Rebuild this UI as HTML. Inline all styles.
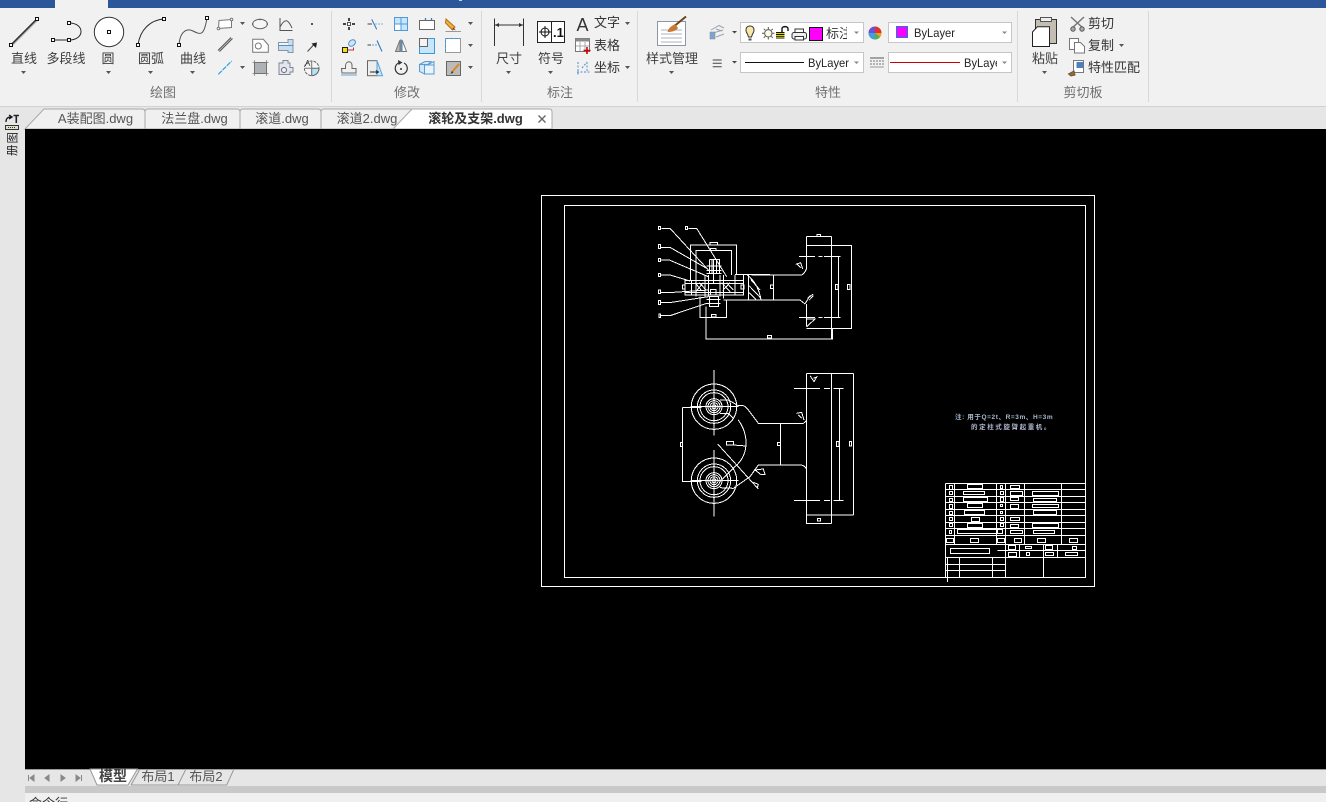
<!DOCTYPE html>
<html><head><meta charset="utf-8"><style>
html,body{margin:0;padding:0;background:#000;overflow:hidden;width:1326px;height:802px}
svg{display:block}
text{font-family:"Liberation Sans","Noto Sans CJK SC",sans-serif}
.l{font-size:13px;fill:#3f3f3f;text-anchor:middle}
.g{font-size:13px;fill:#6f6f6f;text-anchor:middle}
.t{font-size:13px;fill:#555;text-anchor:middle}
.s{font-size:13px;fill:#333}
.i{fill:none;stroke:#555;stroke-width:1}
.b{fill:none;stroke:#2a2a2a;stroke-width:1}
.c{fill:#fff;stroke:#c6c6c6;stroke-width:1}
.cad{fill:none;stroke:#fff;stroke-width:3;shape-rendering:crispEdges}
.cad1{fill:none;stroke:#fff;stroke-width:1;shape-rendering:crispEdges}
</style></head><body>
<svg width="1326" height="802" viewBox="0 0 1326 802" xmlns="http://www.w3.org/2000/svg">
<defs><clipPath id="cb"><rect x="824" y="24" width="23" height="17"/></clipPath></defs>
<!-- chrome -->
<rect width="1326" height="802" fill="#e6e6e6"/>
<rect x="0" y="0" width="1326" height="107" fill="#f1f1f1"/>
<rect x="0" y="0" width="55" height="8" fill="#2b579a"/>
<rect x="108" y="0" width="1218" height="8" fill="#2b579a"/>
<rect x="459" y="0" width="3" height="1" fill="#c8d2e4"/>
<rect x="0" y="106" width="1326" height="1" fill="#d2d2d2"/>
<g stroke="#d8d8d8"><path d="M331.5 11V102M481.5 11V102M637.5 11V102M1017.5 11V102M1148.5 11V102"/></g>

<!-- draw icons -->
<path d="M11 45L37 19" stroke="#333" stroke-width="1.600"/><path d="M12 46L38 20" stroke="#bbb"/>
<rect x="9.500" y="43.500" width="3" height="3" fill="#fff" stroke="#111"/><rect x="35.500" y="17.500" width="3" height="3" fill="#fff" stroke="#111"/>
<path d="M53 40H69C85 40 85 23 69 23" class="b"/>
<rect x="51.500" y="38.500" width="3" height="3" fill="#fff" stroke="#111"/><rect x="67.500" y="38.500" width="3" height="3" fill="#fff" stroke="#111"/><rect x="67.500" y="21.500" width="3" height="3" fill="#fff" stroke="#111"/>
<circle cx="109" cy="32" r="14.700" fill="#fff" stroke="#333"/><rect x="107.500" y="30.500" width="3" height="3" fill="#fff" stroke="#111"/>
<path d="M138 45C140 30 150 20 164 19" class="b"/>
<rect x="136.500" y="43.500" width="3" height="3" fill="#fff" stroke="#111"/><rect x="162.500" y="17.500" width="3" height="3" fill="#fff" stroke="#111"/>
<path d="M179 45C180 31 187 28 193 31C201 35 204 36 207 18" class="i"/>
<rect x="177.500" y="43.500" width="3" height="3" fill="#fff" stroke="#111"/><rect x="205.500" y="16.500" width="3" height="3" fill="#fff" stroke="#111"/>
<text class="l" x="24" y="63">直线</text><text class="l" x="66" y="63">多段线</text><text class="l" x="108" y="63">圆</text><text class="l" x="151" y="63">圆弧</text><text class="l" x="193" y="63">曲线</text>
<g fill="#555"><path d="M21 71h5l-2.500 3zM106 71h5l-2.500 3zM148 71h5l-2.500 3zM190 71h5l-2.500 3zM240 22h5l-2.500 3zM240 66h5l-2.500 3z"/></g>
<text class="g" x="163" y="97">绘图</text>
<!-- small draw tools -->
<path d="M219 20.500L231.500 19.500V27.500L218.500 28.500Z" fill="#fff" stroke="#777"/><circle cx="231.500" cy="19.500" r="1.300" fill="#fff" stroke="#777"/><circle cx="218.500" cy="28.500" r="1.300" fill="#fff" stroke="#777"/>
<ellipse cx="260" cy="24" rx="7.300" ry="4.700" fill="#f6f6f6" stroke="#666"/><circle cx="260" cy="19.500" r=".8" fill="#555"/><circle cx="252.700" cy="24" r=".8" fill="#555"/><circle cx="267.300" cy="24" r=".8" fill="#555"/>
<path d="M280 18V30.500H292.500M280 27C285 18 288 19 292 28" class="i"/>
<rect x="311" y="23" width="2" height="2" fill="#555"/>
<path d="M218 50.500L231 37.500M219.500 51.500L232.500 38.500" stroke="#555" stroke-width="1.100"/><path d="M218.800 51L231.800 38" stroke="#bbb" stroke-width=".6"/>
<path d="M252.700 39.300H263.300L268.300 45V52.300H252.700Z" fill="#fff" stroke="#777"/><circle cx="258.300" cy="46" r="3" fill="none" stroke="#777"/>
<path d="M278.500 42.500H288V39.500H293V52.500H288V50.500H278.500Z" fill="#c9ddf2" stroke="#8a95a2"/><path d="M278.500 45.500H293" stroke="#4d8fc8"/><rect x="279" y="43" width="9" height="2" fill="#f4f4f4"/>
<path d="M307.500 51.500L313.500 45" stroke="#444"/><path d="M311.500 43.500L317 42.500L316 48Z" fill="#222"/>
<path d="M218.300 74.300L231.700 61" stroke="#2aa4e0" stroke-width="1.200" stroke-dasharray="5 1"/>
<rect x="254.500" y="62.500" width="12" height="11" fill="#aeb2b6" stroke="#666"/><path d="M252.500 62.500H268.500M252.500 73.500H268.500M254.500 60V76M266.500 60V76" stroke="#777" stroke-width=".7"/>
<path d="M279 63H283V60.500H288V63H290V67.500H293V72H290V74.500H279Z" fill="#e3e6ef" stroke="#7d8794"/><circle cx="284" cy="70" r="2.500" fill="#f1f1f1" stroke="#667"/>
<circle cx="311.700" cy="68.300" r="7.300" fill="#f6f6f6" stroke="#666" stroke-dasharray="3 1"/><path d="M311.700 68.300H319A7.300 7.300 0 0 1 311.700 75.600Z" fill="#b5e2f7" stroke="#666"/><path d="M311.700 61V68.300H305" fill="none" stroke="#777"/>
<text x="305" y="66" font-size="8" fill="#333">A</text>

<!-- modify icons -->
<path d="M349 18V21M349 27V30M343 24H346M352 24H355" stroke="#444" stroke-width="2"/><rect x="347.500" y="22.500" width="3" height="3" fill="#fff" stroke="#555"/>
<path d="M367.500 24H372" stroke="#444"/><path d="M375 24H383" stroke="#7ab8e0" stroke-dasharray="2 1"/><path d="M371.700 19.300L376.700 29.300" stroke="#2a70c0"/>
<g stroke="#4d9bd8"><rect x="394.500" y="17.500" width="6.500" height="6.500" fill="#c8e6fa"/><rect x="401" y="17.500" width="6.500" height="6.500" fill="#c8e6fa"/><rect x="394.500" y="24" width="6.500" height="6.500" fill="#fff"/><rect x="401" y="24" width="6.500" height="6.500" fill="#c8e6fa"/></g>
<rect x="419.500" y="20.500" width="15" height="9" fill="#fff" stroke="#666"/><path d="M425.500 18V20M431.500 18V20" stroke="#2a80c4" stroke-width="1.300"/>
<path d="M446 19L455 27L452.500 30L445.500 23Z" fill="#f0b030" stroke="#b07020"/><path d="M453 27.500L456 30.500L452.500 29Z" fill="#702020"/><path d="M445.500 31.500H461" stroke="#999"/>
<path d="M468 22h5l-2.500 3zM468 44h5l-2.500 3zM468 66h5l-2.500 3z" fill="#555"/>
<rect x="342.500" y="47.500" width="5" height="5" fill="#f0e020" stroke="#222"/><ellipse cx="352" cy="43" rx="3.800" ry="2.800" transform="rotate(-40 352 43)" fill="#cfe6f8" stroke="#4d8fc8"/><path d="M347.500 50H353.500V47.500" stroke="#b33" fill="none"/>
<path d="M367.500 45H371" stroke="#444"/><path d="M372 45H377" stroke="#5aa0d8" stroke-dasharray="2 1"/><path d="M377 40.500L382 51.500" stroke="#2a70c0"/>
<path d="M400 40V51.500H395.500Z" fill="#b8b8b8" stroke="#777"/><path d="M402 40V51.500H406.500Z" fill="#fff" stroke="#777"/><path d="M401 39V52" stroke="#5aa0d8"/>
<rect x="419.500" y="38.500" width="15" height="15" fill="#c8e6fa" stroke="#3a9ad9"/><rect x="419.500" y="38.500" width="8" height="8" fill="#f4f4f4" stroke="#666"/>
<rect x="445.500" y="38.500" width="15" height="14" fill="#fff" stroke="#999"/><path d="M445.500 52V38.500H460" fill="none" stroke="#3a9ad9" stroke-dasharray="3 1.500"/>
<path d="M342 73H356V68.500H352V65.500C352 60.500 346 60.500 345.500 65.500V68.500H341.500Z" fill="none" stroke="#666"/><path d="M341 75H357" stroke="#6aa5d8"/>
<rect x="367.500" y="60.700" width="9.500" height="15" fill="#eee" stroke="#666"/><path d="M377 60.700L382.500 75.700H377Z" fill="#c8e6fa" stroke="#5aa0d8"/><path d="M370 72H378M376 70.500L378.500 72L376 73.500" fill="none" stroke="#222"/>
<path d="M404 63A6 6 0 1 1 398.500 63" fill="none" stroke="#333" stroke-width="1.200"/><circle cx="401" cy="69" r="1" fill="#333"/><path d="M398 60L402.500 62.500L398.500 65Z" fill="#333"/>
<path d="M419.500 64.500L425 61.500H431L428 64.500H419.500V71.500L424.500 74V64.500" fill="#d2e8f8" stroke="#5b9bd0"/><rect x="424.500" y="65" width="9.500" height="9" fill="#e8f4fc" stroke="#5b9bd0"/><path d="M428 64.500L434 61.500V65" fill="none" stroke="#5b9bd0"/>
<rect x="446.500" y="61.500" width="14" height="14" fill="#bbb" stroke="#666"/><path d="M452 72L459 64" stroke="#d98a20" stroke-width="2"/><path d="M450.500 74L452 71L453.500 72.500Z" fill="#333"/>
<text class="g" x="407" y="97">修改</text>

<!-- annotation -->
<path d="M494.500 18.500V46M523.500 18.500V46M495 25H523" stroke="#333" fill="none"/><path d="M495 25l4-2v4zM523 25l-4-2v4z" fill="#333"/>
<rect x="537.500" y="21.500" width="27" height="21" fill="#fff" stroke="#222"/><path d="M551.500 22V42" stroke="#222"/><circle cx="545" cy="32" r="4" fill="none" stroke="#111"/><path d="M539 32H551M545 26V38" stroke="#111"/>
<text x="553" y="37" font-size="13" font-weight="bold" fill="#111">.1</text>
<text class="l" x="509" y="63">尺寸</text><text class="l" x="551" y="63">符号</text>
<path d="M506 71h5l-2.500 3zM548 71h5l-2.500 3z" fill="#555"/>
<text x="576.500" y="31" font-size="18" fill="#333">A</text>
<text class="s" x="594" y="27">文字</text><text class="s" x="594" y="50">表格</text><text class="s" x="594" y="72">坐标</text>
<path d="M625 22h5l-2.500 3zM625 66h5l-2.500 3z" fill="#555"/>
<rect x="575.500" y="38.500" width="14" height="13" fill="#fff" stroke="#777"/><rect x="575.500" y="38.500" width="14" height="3" fill="#8a8a8a"/><path d="M580 42V51M585 42V51M576 46H589" stroke="#aaa"/><path d="M587 47V54M583.500 50.500H590.500" stroke="#c00" stroke-width="1.600"/>
<path d="M578 62V75M587 62V72M577 72H590M582 68L587 62" stroke="#4a8fc8" stroke-dasharray="2 1.500" fill="none"/>
<text class="g" x="560" y="97">标注</text>

<!-- properties -->
<rect x="657.500" y="21.500" width="28" height="24" fill="#fff" stroke="#8a97a8"/><path d="M661 30H682M661 34H682M661 38H682M661 42H682" stroke="#a9b2c0"/>
<path d="M672 28L686 16.500" stroke="#6a4418" stroke-width="2"/><path d="M667.500 32C669 27 672 26 675 24L678 28C676 31 672 32 667.500 32Z" fill="#c87830"/>
<text class="l" x="672" y="63">样式管理</text><path d="M669 71h5l-2.500 3z" fill="#555"/>
<path d="M711 30L719 25.500L724 28M713 33L723 30M716 37L724 34M716 29L722 31" fill="none" stroke="#99a3ae"/><rect x="710" y="32" width="5" height="7" fill="#7aa5d0" stroke="#888" stroke-width=".5"/>
<path d="M732 31h5l-2.500 2.500zM732 61h5l-2.500 2.500z" fill="#444"/>
<path d="M712.700 60H721.700M712.700 63.300H721.700M712.700 66.700H721.700" stroke="#444"/>
<rect class="c" x="740.500" y="22.500" width="123" height="20"/>
<path d="M750 26C745.500 26 745 31 747.500 34L748.500 37H751.500L752.500 34C755 31 754.500 26 750 26Z" fill="#f8e8a8" stroke="#333"/><path d="M748.500 38.500H751.500V40.500H748.500Z" fill="#555"/>
<circle cx="768.300" cy="33.300" r="3.700" fill="#fffbe0" stroke="#555"/><path d="M768.300 27V29M768.300 37.500V39.500M762 33.300H764M772.500 33.300H774.500M763.800 28.800L765.200 30.200M772.800 28.800L771.400 30.200M763.800 37.800L765.200 36.400M772.800 37.800L771.400 36.400" stroke="#555"/>
<rect x="776" y="32" width="8.500" height="6.500" fill="#111"/><path d="M776 33.500H784.500M776 35.500H784.500M776 37.300H784.500" stroke="#d8d000"/><path d="M782 32V28.500C782 26 788 26 788 28.500V31" fill="none" stroke="#111" stroke-width="1.400"/>
<rect x="792" y="32.500" width="14.500" height="6.500" rx="2" fill="#eee" stroke="#333"/><rect x="795" y="29" width="8.500" height="3.500" fill="#fff" stroke="#333"/><rect x="795" y="36.500" width="8.500" height="3.500" fill="#fff" stroke="#333"/>
<rect x="809.500" y="27.500" width="13" height="13" fill="#f0f" stroke="#111"/>
<text class="s" x="826" y="38" clip-path="url(#cb)">标注</text>
<path d="M854 31.500h5l-2.500 2.500z" fill="#888"/>
<circle cx="875" cy="33" r="6.500" fill="#e8a020"/><path d="M875 33V26.500A6.500 6.500 0 0 1 881.500 33Z" fill="#e03030"/><path d="M875 33V26.500A6.500 6.500 0 0 0 868.500 33Z" fill="#6a4fd8"/><path d="M875 33H868.500A6.500 6.500 0 0 0 875 39.500Z" fill="#3fa0e0"/><path d="M875 33V39.500A6.500 6.500 0 0 0 880 37Z" fill="#50b050"/>
<rect class="c" x="888.500" y="22.500" width="123" height="20"/>
<rect x="896.500" y="26.500" width="11" height="11" fill="#f0f" stroke="#1a7fd0"/>
<text x="914" y="37" font-size="12" fill="#222" textLength="41" lengthAdjust="spacingAndGlyphs">ByLayer</text>
<path d="M1002 31.500h5l-2.500 2.500z" fill="#888"/>
<rect class="c" x="740.500" y="52.500" width="123" height="20"/>
<path d="M745 62.500H804" stroke="#111"/><text x="808" y="67" font-size="12" fill="#222" textLength="41" lengthAdjust="spacingAndGlyphs">ByLayer</text><path d="M854 61.500h5l-2.500 2.500z" fill="#888"/>
<path d="M870 58H884" stroke="#555"/><path d="M870 61H884M870 64H884" stroke="#777" stroke-dasharray="2 1"/><path d="M870 67H884" stroke="#999"/>
<rect class="c" x="888.500" y="52.500" width="123" height="20"/>
<path d="M890 62.500H960" stroke="#c00"/>
<svg x="964" y="52" width="33" height="20"><text x="0" y="15" font-size="12" fill="#222" textLength="41" lengthAdjust="spacingAndGlyphs">ByLayer</text></svg>
<path d="M1002 61.500h5l-2.500 2.500z" fill="#888"/>
<text class="g" x="828" y="97">特性</text>

<!-- clipboard -->
<rect x="1035.500" y="19.500" width="21" height="24" fill="#c4bdb2" stroke="#333"/><rect x="1040.500" y="17.500" width="11" height="4" fill="#eee" stroke="#555"/>
<path d="M1032.500 32L1037.500 26.700H1049.500V46.500H1032.500Z" fill="#fff" stroke="#222"/>
<text class="l" x="1045" y="63">粘贴</text><path d="M1042 71h5l-2.500 3z" fill="#555"/>
<path d="M1071 17L1084 29M1084 17L1071 29" stroke="#777" stroke-width="1.500"/><circle cx="1073" cy="29" r="2.200" fill="#aaa" stroke="#555"/><circle cx="1082" cy="29" r="2.200" fill="#aaa" stroke="#555"/>
<rect x="1069.500" y="38.500" width="9" height="11" fill="#fff" stroke="#777"/><path d="M1074.500 42.500H1080.500L1084.500 46.500V53H1074.500Z" fill="#fff" stroke="#777"/>
<rect x="1073.500" y="60.500" width="10" height="12" fill="#fff" stroke="#777"/><rect x="1076.500" y="62" width="6.500" height="6" fill="#4a7fc0"/><path d="M1068.500 74L1074 71L1075 75L1071 76Z" fill="#a06828" stroke="#654"/>
<text class="s" x="1088" y="28">剪切</text><text class="s" x="1088" y="50">复制</text><text class="s" x="1088" y="72">特性匹配</text>
<path d="M1119 44h5l-2.500 3z" fill="#555"/>
<text class="g" x="1083" y="97">剪切板</text>

<!-- doc tabs -->
<g fill="#f0f0f0" stroke="#a8a8a8">
<path d="M25 129L44 109H142Q145 109 145 112V129Z"/>
<path d="M145 129V112Q145 109 148 109H237Q240 109 240 112V129Z"/>
<path d="M240 129V112Q240 109 243 109H318Q321 109 321 112V129Z"/>
<path d="M321 129V112Q321 109 324 109H412V129Z"/>
</g>
<path d="M393 129L412 109H549Q552 109 552 112V129Z" fill="#fff" stroke="#a8a8a8"/>
<text class="t" x="95.500" y="123">A装配图.dwg</text><text class="t" x="194.500" y="123">法兰盘.dwg</text><text class="t" x="282" y="123">滚道.dwg</text><text class="t" x="367" y="123">滚道2.dwg</text>
<text x="475.500" y="123" font-size="13" font-weight="bold" fill="#333" text-anchor="middle">滚轮及支架.dwg</text>
<path d="M538.500 115.500L545.500 122.500M545.500 115.500L538.500 122.500" stroke="#666" stroke-width="1.400"/>
<!-- left bar -->
<path d="M6 122C6 118 8 117 11 117M9 115L12 117L9 119" fill="none" stroke="#111" stroke-width="1.300"/><path d="M13.500 115.500H19M16.300 115.500V123" stroke="#222" stroke-width="1.600"/>
<rect x="5.500" y="125.500" width="13" height="4" fill="#e4e0c8" stroke="#333"/><path d="M8 127.500H16" stroke="#333" stroke-dasharray="1 1"/>
<g transform="translate(6.500 143.500) rotate(-90)"><text x="0" y="10" font-size="11.500" fill="#222">图</text></g>
<g transform="translate(6 156) rotate(-90)"><text x="0" y="10" font-size="11.500" fill="#222">册</text></g>

<!-- canvas -->
<rect x="25" y="129" width="1301" height="640" fill="#000"/>
<g class="cad1">
<rect x="541.500" y="195.500" width="553" height="391"/>
<rect x="564.500" y="205.500" width="521" height="372"/>
</g>

<!-- top view -->
<g transform="translate(650 225) scale(.33333)" class="cad">
<path d="M25 4h7v10h-7zM106 4h7v10h-7zM25 59h7v12h-7zM25 100h7v10h-7zM25 145h7v10h-7zM25 195h7v11h-7zM25 227h7v11h-7zM27 267h5v11h-5z"/>
<path d="M34 10H60L175 135M115 10H140L230 155M33 67H60L170 130M33 105H58L175 155M33 150H60L120 168M33 202H70L175 195M33 232H65L175 215M33 272H60L170 235"/>
<path d="M455 150Q462 148 470 130V35M450 225L465 237M465 237L480 212M470 237V305"/>
<path d="M470 35H545M470 62H605V310H470M545 35V342M501 28h10v7h-10z"/>
<path d="M447 95H495M505 95H517M522 95H572M447 277H495M505 277H517M522 277H572M565 95V277M556 178h8v16h-8zM592 178h8v16h-8z"/>
<path d="M170 342H547V310M352 331h13v8h-13z"/>
<path d="M437 118L452 113L458 132M442 118L452 128M472 220L490 207M478 225L490 212M470 305L495 282L470 282"/>
<path d="M370 150V225M361 180h9v11h-9zM305 150H455M305 225H450"/>
</g>
<!-- top view centre -->
<g transform="translate(680 240) scale(.33333)" class="cad">
<path d="M32 120V15H170V105M48 170V32H155V105M90 8h22v7h-22zM92 25h16v7h-16z"/>
<path d="M88 58H118V100M88 58V100M96 58V100M110 58V100M80 78H125M80 92H125M80 100H125"/>
<path d="M15 122H190V165H15ZM15 130H190M15 157H190M7 135h8v12h-8zM183 135h9v12h-9zM35 122V165M165 105V165"/>
<path d="M75 105V170M85 105V170M120 105V170M130 105V175M92 148h16v17h-16zM88 170H115V200H88ZM80 178H122M80 190H122M100 58V130"/>
<path d="M45 128L65 152M58 128L78 150M50 152L70 128M125 128L150 155M140 128L160 150M128 152L150 128"/>
<path d="M165 103H270M130 180H270M190 103V165M205 103V178M200 103Q235 130 243 180M212 118L240 150M208 138L240 172M207 158L228 178M60 170V233H140V180M94 223h14v8h-14zM78 200V298"/>
</g>

<!-- bottom view -->
<g transform="translate(670 365) scale(.33333)" class="cad">
<circle cx="132" cy="125" r="68"/><circle cx="132" cy="125" r="50"/><circle cx="132" cy="125" r="42"/><circle cx="132" cy="125" r="24"/><circle cx="132" cy="125" r="18"/><circle cx="132" cy="125" r="12"/><circle cx="132" cy="125" r="6"/>
<circle cx="132" cy="347" r="68"/><circle cx="132" cy="347" r="50"/><circle cx="132" cy="347" r="42"/><circle cx="132" cy="347" r="24"/><circle cx="132" cy="347" r="18"/><circle cx="132" cy="347" r="12"/><circle cx="132" cy="347" r="6"/>
<path d="M132 15V212M62 125H205M132 255V455M62 347H205"/>
<path d="M38 127H95M38 127V349H95M31 232h7v13h-7z"/>
<path d="M150 105H175L205 122H220Q228 125 235 135L265 175H400Q405 172 410 165M150 145H175L190 160"/>
<path d="M205 165Q230 200 228 240Q225 280 195 305L150 350M143 237L265 372M170 230h20v10h-20zM190 240L228 243"/>
<path d="M150 368L190 370L240 335L265 300H390Q405 300 410 315M331 175V298M322 232h9v9h-9z"/>
<path d="M410 25V450M485 25V475M410 25H550M410 450H550M550 25V450M538 229h7v14h-7z"/>
<path d="M372 70H450M462 70H480M490 70H520M372 406H450M462 406H480M490 406H520M508 70V406M499 229h8v15h-8z"/>
<path d="M410 450V475H485M442 460h10v8h-10z"/>
<path d="M420 32L432 50L440 36L430 40M380 145L395 142L402 165M385 150L395 160M255 315L280 312L285 328L272 328ZM250 352L265 358L262 368"/>
</g>

<!-- note -->
<text x="955" y="419" font-size="6.500" font-weight="bold" fill="#a8bcd0" letter-spacing=".6">注: 用于Q=2t、R=3m、H=3m</text>
<text x="971" y="429" font-size="6.500" font-weight="bold" fill="#b0b8d0" letter-spacing="1.600">的定柱式旋臂起重机。</text>

<!-- title block -->
<g class="cad1">
<path d="M945.500 483.500H1085.500M945.500 489.500H1085.500M945.500 496.500H1085.500M945.500 502.500H1085.500M945.500 509.500H1085.500M945.500 515.500H1085.500M945.500 522.500H1085.500M945.500 528.500H1085.500M945.500 535.500H1085.500M945.500 544.500H1085.500M945.500 557.500H1085.500M997.500 550.500H1085.500M945.500 564.500H1005.500M945.500 570.500H1005.500"/>
<path d="M945.500 483.500V577.500M947.500 557.500V582M954.500 483.500V544.500M996.500 483.500V544.500M1005.500 483.500V577.500M1024.500 483.500V544.500M1061.500 483.500V544.500M959.500 557.500V577.500M992.500 557.500V577.500M1043.500 557.500V577.500M1019.500 544.500V557.500M1043.500 544.500V557.500M1057.500 544.500V557.500"/>
<path d="M949.500 485.500h3v4h-3zM949.500 491.500h3v3h-3zM949.500 498.500h3v3h-3zM949.500 504.500h3v4h-3zM949.500 511.500h3v3h-3zM949.500 517.500h3v3h-3zM949.500 523.500h3v3h-3zM949.500 530.500h2v3h-2zM946.500 538.500h7v4h-7z"/>
<path d="M967.500 484.500h15v4h-15zM963.500 491.500h21v3h-21zM963.500 497.500h24v4h-24zM967.500 503.500h15v4h-15zM964.500 510.500h20v4h-20zM971.500 517.500h8v4h-8zM967.500 523.500h15v4h-15zM957.500 529.500h39v4h-39zM970.500 538.500h8v4h-8zM950.500 548.500h39v5h-39z"/>
<path d="M1000.500 485.500h2v3h-2zM1000.500 491.500h3v3h-3zM1000.500 497.500h3v4h-3zM1000.500 504.500h2v2h-2zM1000.500 511.500h2v2h-2zM1000.500 517.500h3v3h-3zM1000.500 523.500h3v3h-3zM997.500 529.500h5v4h-5zM997.500 538.500h7v4h-7z"/>
<path d="M1010.500 485.500h9v3h-9zM1010.500 491.500h12v4h-12zM1010.500 497.500h8v3h-8zM1010.500 504.500h8v4h-8zM1010.500 517.500h9v3h-9zM1010.500 524.500h8v3h-8zM1010.500 530.500h12v3h-12zM1014.500 538.500h7v4h-7z"/>
<path d="M1032.500 491.500h26v4h-26zM1033.500 498.500h23v3h-23zM1032.500 504.500h26v3h-26zM1033.500 510.500h23v4h-23zM1032.500 523.500h26v4h-26zM1033.500 530.500h21v3h-21zM1037.500 538.500h8v4h-8zM1069.500 538.500h8v4h-8z"/>
<path d="M1008.500 545.500h7v4h-7zM1025.500 546.500h6v2h-6zM1045.500 545.500h7v4h-7zM1072.500 546.500h4v3h-4zM1008.500 552.500h8v4h-8zM1026.500 552.500h3v3h-3zM1045.500 552.500h8v3h-8zM1065.500 552.500h12v3h-12z"/>
</g>

<!-- bottom bar -->
<rect x="25" y="769" width="1301" height="17" fill="#e6e6e6"/>
<rect x="25" y="769" width="1301" height="1" fill="#9a9a9a"/>
<rect x="25" y="786" width="1301" height="7" fill="#c9c9c9"/>
<rect x="25" y="793" width="1301" height="9" fill="#f0f0f0"/>
<path d="M28.500 775V781M34 775L30 778L34 781ZM49 775L45 778L49 781ZM61 775L65 778L61 781ZM76 775L80 778L76 781ZM81.500 775V781" fill="#888" stroke="#888"/>
<path d="M90 769L97 785H128L137.500 769Z" fill="#fff" stroke="#999"/>
<path d="M131 785L140 769M131 785H178L186 769M178 785L186 769M178 785H226.700L234 769" fill="none" stroke="#999"/>
<text x="113" y="781" font-size="14" font-weight="bold" fill="#444" text-anchor="middle">模型</text>
<text x="158" y="781" font-size="13" fill="#555" text-anchor="middle">布局1</text>
<text x="206" y="781" font-size="13" fill="#555" text-anchor="middle">布局2</text>
<text x="29" y="808" font-size="13" fill="#333">命令行</text>
</svg>
</body></html>
